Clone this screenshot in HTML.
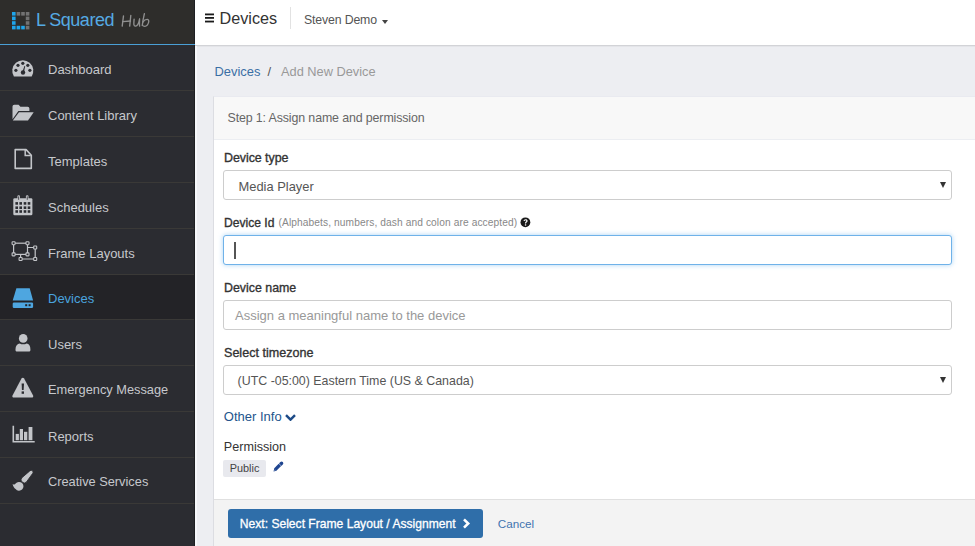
<!DOCTYPE html>
<html><head><meta charset="utf-8">
<style>
*{box-sizing:border-box;margin:0;padding:0}
html,body{width:975px;height:546px;overflow:hidden;background:#edeef2;font-family:"Liberation Sans",sans-serif}
.a{position:absolute}
.t{position:absolute;white-space:nowrap;line-height:1}
.sbt{position:absolute;left:48px;white-space:nowrap;line-height:1;font-size:13px;color:#c6c8cc}
.div{position:absolute;left:0;width:194px;height:1px;background:#3a3937}
.lbl{position:absolute;left:224px;white-space:nowrap;line-height:1;font-weight:400;color:#333;font-size:12.4px;-webkit-text-stroke:0.35px #333}
.box{position:absolute;left:223px;width:729px;height:30px;border:1px solid #cdcdcd;border-radius:3px;background:#fff}
.arr{position:absolute;left:940px;width:0;height:0;border-left:3px solid transparent;border-right:3px solid transparent;border-top:6px solid #333}
</style></head><body>
<!-- sidebar -->
<div class="a" style="left:0;top:0;width:195px;height:546px;background:#2b2c31"></div>
<div class="a" style="left:194px;top:0;width:1px;height:546px;background:#1e1f22"></div>
<div class="a" style="left:195px;top:45px;width:2px;height:501px;background:#f7f8fb"></div>
<div class="a" style="left:0;top:0;width:194px;height:44px;background:#2e2d2b"></div>
<div class="a" style="left:0;top:44px;width:195px;height:1px;background:#4a9fd6"></div>
<svg class="a" style="left:12px;top:11.6px" width="18" height="18" viewBox="0 0 18 18"><g fill="#1fa5ea"><rect x="0.0" y="0.0" width="3.6" height="3.6"/><rect x="0.0" y="4.6" width="3.6" height="3.6"/><rect x="0.0" y="9.2" width="3.6" height="3.6"/><rect x="0.0" y="13.8" width="3.6" height="3.6"/><rect x="4.6" y="13.8" width="3.6" height="3.6"/><rect x="9.2" y="13.8" width="3.6" height="3.6"/></g><g fill="#727272"><rect x="4.6" y="0.0" width="3.6" height="3.6"/><rect x="9.2" y="0.0" width="3.6" height="3.6"/><rect x="13.8" y="0.0" width="3.6" height="3.6"/><rect x="13.8" y="4.6" width="3.6" height="3.6"/><rect x="13.8" y="9.2" width="3.6" height="3.6"/><rect x="13.8" y="13.8" width="3.6" height="3.6"/></g></svg>
<div class="t" style="left:36px;top:11.1px;font-size:18px;letter-spacing:-0.5px;color:#55aae3">L Squared</div>
<svg class="a" style="left:0;top:0" width="160" height="40" viewBox="0 0 160 40"><g fill="none" stroke="#909090" stroke-width="1.35" stroke-linecap="round" stroke-linejoin="round">
<path d="M123.5 15.9L122.2 26.1"/><path d="M130.8 15.5L129.7 26.1"/><path d="M122.8 21.6L130.5 21"/>
<path d="M134.1 19.2C134 21 133.7 23 133.9 24.6C134.1 25.8 134.8 26.2 135.6 26.1C137.5 25.8 139 22 139.6 18.8C139.5 21.5 139.3 24 139.6 26.1"/>
<path d="M144.4 13.7C143.5 17.5 142.6 22 142.3 25.4"/><path d="M142.9 22.1C144 20.3 145.8 19.3 147.4 19.4C148.7 19.6 149 21 148.6 22.4C148 24.6 146.6 26.2 144.8 26.3C143.6 26.3 142.8 25.9 142.4 25.4"/>
</g></svg>

<!-- rows: top = 45 + 45.83k ; divider at top+45 -->
<div class="div" style="top:90px"></div>
<div class="div" style="top:136px"></div>
<div class="div" style="top:182px"></div>
<div class="div" style="top:228px"></div>
<div class="div" style="top:274px"></div>
<div class="div" style="top:319px"></div>
<div class="div" style="top:365px"></div>
<div class="div" style="top:411px"></div>
<div class="div" style="top:457px"></div>
<div class="div" style="top:503px"></div>
<div class="a" style="left:0;top:275px;width:194px;height:44px;background:#232327"></div>

<svg class="a" style="left:0;top:0" width="195" height="546" viewBox="0 0 195 546">
<g fill="#c3c5c9">
 <!-- dashboard -->
 <path d="M13.9 76.4A10.5 10.5 0 1 1 31.7 76.4Z"/>
 <!-- folder -->
 <path d="M12.5 106.6q0-1.8 1.8-1.8h4.3l1.8 1.9h7.2q1.8 0 1.8 1.8v2.4H18.4L12.5 119.2z"/>
 <path d="M19 112.3H33.7L28 120.5H12.8z"/>
 <!-- calendar -->
 <rect x="13.3" y="198.2" width="19.1" height="17.1" rx="1.3"/>
 <rect x="17.4" y="195.3" width="2.6" height="5.4" rx="1.2"/>
 <rect x="25.9" y="195.3" width="2.6" height="5.4" rx="1.2"/>
 <!-- devices -->
 <!-- users -->
 <circle cx="23.2" cy="338.4" r="4.3"/>
 <path d="M15.5 349.3c0-3.5 1.8-5.6 4.3-5.9 1 .6 2.1.9 3.4.9s2.4-.3 3.4-.9c2.5.3 3.8 2.4 3.8 5.9v.6c0 1-.7 1.6-1.7 1.6H17.2c-1 0-1.7-.6-1.7-1.6z"/>
 <!-- warning -->
 <path d="M22.8 377.8c.6 0 1 .3 1.3.8l9 16.8c.5 1-.2 2.2-1.2 2.2H13.7c-1 0-1.7-1.2-1.2-2.2l9-16.8c.3-.5.7-.8 1.3-.8z"/>
 <!-- reports bars -->
 <rect x="15.7" y="433.9" width="3.2" height="6.3"/>
 <rect x="19.8" y="429" width="3.2" height="11.2"/>
 <rect x="24" y="431.8" width="3.3" height="8.4"/>
 <rect x="28.6" y="427" width="3.8" height="13.2"/>
 <!-- brush -->
 <path d="M12.6 483.9C13.9 484.9 15 484.7 15.6 483.6A4.4 4.4 0 1 1 15.6 489C14.2 488.1 13.1 486.3 12.6 483.9z"/>
</g>
<g fill="#2b2c31">
 <circle cx="22.8" cy="63.3" r="1.6"/><circle cx="18" cy="65.3" r="1.6"/><circle cx="15.9" cy="70.3" r="1.6"/><circle cx="27.8" cy="65.3" r="1.6"/><circle cx="29.9" cy="70.3" r="1.6"/>
 <circle cx="23" cy="72.5" r="2.2"/><path d="M22.2 72.4l2.2-6.4.8.2-1.4 6.5z"/>
 <!-- calendar cells -->
 <rect x="15.4" y="202.1" width="2.6" height="2.6"/><rect x="19.4" y="202.1" width="2.6" height="2.6"/><rect x="23.7" y="202.1" width="2.6" height="2.6"/><rect x="27.7" y="202.1" width="2.6" height="2.6"/>
 <rect x="15.4" y="206.4" width="2.6" height="2.6"/><rect x="19.4" y="206.4" width="2.6" height="2.6"/><rect x="23.7" y="206.4" width="2.6" height="2.6"/><rect x="27.7" y="206.4" width="2.6" height="2.6"/>
 <rect x="15.4" y="210.2" width="2.6" height="2.6"/><rect x="19.4" y="210.2" width="2.6" height="2.6"/><rect x="23.7" y="210.2" width="2.6" height="2.6"/><rect x="27.7" y="210.2" width="2.6" height="2.6"/>
 <rect x="18.3" y="196.4" width="0.8" height="3.4"/><rect x="26.8" y="196.4" width="0.8" height="3.4"/>
 <!-- warning mark -->
 <path d="M21.6 383.6h2.4l-.35 6.3h-1.7z"/><rect x="21.6" y="391.4" width="2.4" height="2.4"/>
 <!-- brush gap -->
</g>
<!-- templates -->
<path d="M15.2 149.6h10.9l5.2 5.6v13.2H15.2z" fill="none" stroke="#c3c5c9" stroke-width="1.6" stroke-linejoin="round"/>
<path d="M25.2 150v5.6h5.6" fill="none" stroke="#c3c5c9" stroke-width="1.5"/>
<!-- frame layouts -->
<g fill="none" stroke="#c3c5c9" stroke-width="1.2">
 <path d="M27.5 247.5H35.2V259H20.6V254.4"/>
 <rect x="13.6" y="243.2" width="13.9" height="11.2"/>
</g>
<g fill="#2b2c31" stroke="#c3c5c9" stroke-width="1.1">
 <rect x="12.1" y="241.7" width="3" height="3" rx=".6"/><rect x="26" y="241.7" width="3" height="3" rx=".6"/>
 <rect x="12.1" y="252.9" width="3" height="3" rx=".6"/><rect x="26" y="252.9" width="3" height="3" rx=".6"/>
 <rect x="33.7" y="246" width="3" height="3" rx=".6"/><rect x="33.7" y="257.5" width="3" height="3" rx=".6"/>
 <rect x="19.1" y="257.5" width="3" height="3" rx=".6"/>
</g>
<!-- devices hdd -->
<g fill="#4ea6e0">
 <path d="M16.4 288.2H29.7L33.1 300.6H12.7z"/>
 <rect x="12.7" y="302.5" width="20.4" height="5.6" rx="1.3"/>
</g>
<g fill="#232327"><rect x="25.2" y="304.2" width="2" height="2"/><rect x="28.6" y="304.2" width="2" height="2"/></g>
<!-- reports axis -->
<path d="M13.3 425.8V441.8H34.7" fill="none" stroke="#c3c5c9" stroke-width="1.6"/>
<!-- brush handle -->
<g fill="#c3c5c9" stroke="#2b2c31" stroke-width="0.9"><path d="M29.8 470.9A1.9 1.9 0 0 1 32.6 473.5L26.5 481.9A3.1 3.1 0 0 1 21.9 477.7z"/></g>
</svg>
<div class="sbt" style="top:63.4px">Dashboard</div>
<div class="sbt" style="top:109.2px">Content Library</div>
<div class="sbt" style="top:155.1px">Templates</div>
<div class="sbt" style="top:201px">Schedules</div>
<div class="sbt" style="top:246.7px">Frame Layouts</div>
<div class="sbt" style="top:291.7px;color:#4aa3df">Devices</div>
<div class="sbt" style="top:338.4px">Users</div>
<div class="sbt" style="top:384.2px;font-size:12.8px">Emergency Message</div>
<div class="sbt" style="top:430.1px">Reports</div>
<div class="sbt" style="top:475.9px;font-size:12.8px">Creative Services</div>

<!-- header -->
<div class="a" style="left:195px;top:0;width:780px;height:45px;background:#fff"></div>
<div class="a" style="left:195px;top:45px;width:780px;height:1px;background:#d2d3d7"></div>
<div class="a" style="left:197px;top:46px;width:778px;height:1px;background:#e4e5e9"></div>
<svg class="a" style="left:205px;top:13px" width="9" height="10" viewBox="0 0 9 10"><g fill="#1a1a1a"><rect x="0" y="0.5" width="9" height="1.8"/><rect x="0" y="4" width="9" height="1.8"/><rect x="0" y="7.65" width="9" height="1.8"/></g></svg>
<div class="t" style="left:219.5px;top:10.4px;font-size:16.2px;color:#333">Devices</div>
<div class="a" style="left:290px;top:7px;width:1px;height:22px;background:#e2e2e2"></div>
<div class="t" style="left:304px;top:13.8px;font-size:12.3px;letter-spacing:-0.15px;color:#555">Steven Demo</div>
<div class="a" style="left:381.5px;top:20px;width:0;height:0;border-left:3.5px solid transparent;border-right:3.5px solid transparent;border-top:4px solid #444"></div>

<!-- breadcrumb -->
<div class="t" style="left:214.5px;top:65.5px;font-size:12.9px;color:#3a6ea5">Devices</div>
<div class="t" style="left:267.5px;top:65.5px;font-size:12.9px;color:#555">/</div>
<div class="t" style="left:281px;top:65.7px;font-size:12.8px;color:#999">Add New Device</div>

<!-- card -->
<div class="a" style="left:213px;top:96px;width:762px;height:450px;background:#fff;border-left:1px solid #dcdde2;border-top:1px solid #e9eaf0"></div>
<div class="a" style="left:214px;top:97px;width:761px;height:42px;background:#f8f8f8"></div>
<div class="a" style="left:214px;top:139px;width:761px;height:1px;background:#eceef2"></div>
<div class="t" style="left:227.5px;top:112.3px;font-size:12.4px;letter-spacing:-0.12px;color:#666">Step 1: Assign name and permission</div>

<div class="lbl" style="top:152px;font-size:12.44px;letter-spacing:-0.05px">Device type</div>
<div class="box" style="top:170px"></div>
<div class="t" style="left:238.5px;top:181px;font-size:12.9px;color:#555">Media Player</div>
<div class="arr" style="top:182px"></div>

<div class="lbl" style="top:217.3px;font-size:12.1px">Device Id</div>
<div class="t" style="left:278.5px;top:218.2px;font-size:10.2px;letter-spacing:0.1px;color:#888">(Alphabets, numbers, dash and colon are accepted)</div>
<svg class="a" style="left:520px;top:217px" width="11" height="11" viewBox="0 0 11 11"><circle cx="5.4" cy="5.3" r="4.9" fill="#1a1a1a"/><path d="M3.6 4.1c.1-1.2.9-1.9 2-1.9 1.2 0 2 .7 2 1.7 0 1.3-1.5 1.4-1.5 2.4v.3H4.9v-.4c0-1.5 1.4-1.6 1.4-2.3 0-.4-.3-.7-.8-.7s-.8.3-.9.9z" fill="#fff"/><rect x="4.9" y="7.3" width="1.3" height="1.3" fill="#fff"/></svg>
<div class="box" style="top:235px;border-color:#6fb2e9;box-shadow:0 0 5px rgba(102,175,233,.55)"></div>
<div class="a" style="left:234.4px;top:242px;width:1.3px;height:16.7px;background:#555"></div>

<div class="lbl" style="top:282.1px;font-size:12.38px">Device name</div>
<div class="box" style="top:300px"></div>
<div class="t" style="left:235px;top:309px;font-size:13px;color:#999">Assign a meaningful name to the device</div>

<div class="lbl" style="top:347.1px;font-size:12.57px">Select timezone</div>
<div class="box" style="top:365px"></div>
<div class="t" style="left:237.6px;top:374.8px;font-size:12.4px;color:#555">(UTC -05:00) Eastern Time (US &amp; Canada)</div>
<div class="arr" style="top:377px"></div>

<div class="t" style="left:223.8px;top:410.3px;font-size:13px;color:#24558c">Other Info</div>
<svg class="a" style="left:285px;top:414px" width="11" height="7" viewBox="0 0 11 7"><path d="M1 1.2l4.5 4.5L10 1.2" fill="none" stroke="#1d4b87" stroke-width="2.4"/></svg>

<div class="t" style="left:223.8px;top:441px;font-size:12.6px;color:#333">Permission</div>
<div class="a" style="left:223px;top:460px;width:43px;height:17px;background:#e8e9ee;border-radius:2px"></div>
<div class="t" style="left:229.7px;top:463.2px;font-size:10.9px;color:#444">Public</div>
<svg class="a" style="left:0;top:0" width="300" height="480" viewBox="0 0 300 480"><g fill="#1f4590">
<path d="M273.5 471.5L274.2 468.6L276.6 470.8z"/>
</g><g stroke="#1f4590" stroke-width="3.4"><path d="M275.2 469.6L279.9 464.9"/><path d="M280.6 464.2L281.6 463.2" stroke-linecap="round"/></g>
<path d="M278.6 463.3L281.5 466.2" stroke="#fff" stroke-width="0.7" opacity=".8"/><circle cx="274.8" cy="470.3" r=".5" fill="#fff" opacity=".6"/></svg>

<!-- footer -->
<div class="a" style="left:214px;top:499px;width:761px;height:1px;background:#e0e0e0"></div>
<div class="a" style="left:214px;top:500px;width:761px;height:46px;background:#f3f3f3"></div>
<div class="a" style="left:228px;top:509px;width:255px;height:29px;background:#2f6ea9;border-radius:3px"></div>
<div class="t" style="left:239.8px;top:518.2px;font-size:12.1px;color:#fff;-webkit-text-stroke:0.3px #fff">Next: Select Frame Layout / Assignment</div>
<svg class="a" style="left:462px;top:518px" width="10" height="11" viewBox="0 0 10 11"><path d="M2 1.3l4.2 4.2L2 9.7" fill="none" stroke="#fff" stroke-width="2.6"/></svg>
<div class="t" style="left:497.7px;top:517.5px;font-size:11.7px;color:#3f74b0">Cancel</div>
</body></html>
